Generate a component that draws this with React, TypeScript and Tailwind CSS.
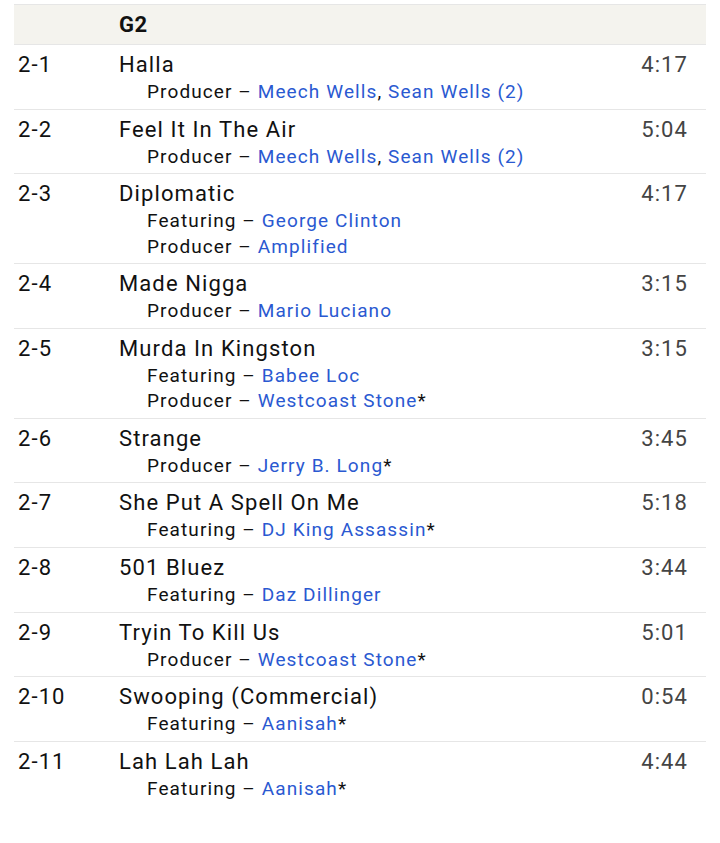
const tracks = [
  { pos: "2-1", title: "Halla", dur: "4:17", credits: [{ role: "Producer", names: [["Meech Wells", ""], ["Sean Wells (2)", ""]] }] },
  { pos: "2-2", title: "Feel It In The Air", dur: "5:04", credits: [{ role: "Producer", names: [["Meech Wells", ""], ["Sean Wells (2)", ""]] }] },
  {
    pos: "2-3", title: "Diplomatic", dur: "4:17",
    credits: [
      { role: "Featuring", names: [["George Clinton", ""]] },
      { role: "Producer", names: [["Amplified", ""]] },
    ],
  },
  { pos: "2-4", title: "Made Nigga", dur: "3:15", credits: [{ role: "Producer", names: [["Mario Luciano", ""]] }] },
  {
    pos: "2-5", title: "Murda In Kingston", dur: "3:15",
    credits: [
      { role: "Featuring", names: [["Babee Loc", ""]] },
      { role: "Producer", names: [["Westcoast Stone", "*"]] },
    ],
  },
  { pos: "2-6", title: "Strange", dur: "3:45", credits: [{ role: "Producer", names: [["Jerry B. Long", "*"]] }] },
  { pos: "2-7", title: "She Put A Spell On Me", dur: "5:18", credits: [{ role: "Featuring", names: [["DJ King Assassin", "*"]] }] },
  { pos: "2-8", title: "501 Bluez", dur: "3:44", credits: [{ role: "Featuring", names: [["Daz Dillinger", ""]] }] },
  { pos: "2-9", title: "Tryin To Kill Us", dur: "5:01", credits: [{ role: "Producer", names: [["Westcoast Stone", "*"]] }] },
  { pos: "2-10", title: "Swooping (Commercial)", dur: "0:54", credits: [{ role: "Featuring", names: [["Aanisah", "*"]] }] },
  { pos: "2-11", title: "Lah Lah Lah", dur: "4:44", credits: [{ role: "Featuring", names: [["Aanisah", "*"]] }] },
];

export default function App() {
  return (
    <div className="min-h-[843px] bg-white px-[14px] pt-[4px] font-['Roboto',sans-serif] text-[#111]">
      <div className="border-t border-[#e6e6e6]">
        <div className="flex h-[40px] items-center border-b border-[#e6e6e6] bg-[#f4f3ee]">
          <div className="w-[105px]" />
          <div className="text-[22px] font-bold tracking-[0.5px]">G2</div>
        </div>
        {tracks.map((t, i) => (
          <div
            key={t.pos}
            className={`flex pt-[5px] pb-[4.2px] ${i < tracks.length - 1 ? "border-b border-[#e6e6e6]" : ""}`}
          >
            <div className="w-[105px] shrink-0 pl-[4px] text-[22px] leading-[29px] tracking-[1.1px]">{t.pos}</div>
            <div className="flex-1">
              <div className="text-[22px] leading-[29px] tracking-[1.1px]">{t.title}</div>
              {t.credits.map((c) => (
                <div key={c.role} className="pl-[28px] text-[19px] leading-[25.4px] tracking-[1.1px]">
                  {c.role} –{" "}
                  {c.names.map(([n, star], j) => (
                    <span key={n}>
                      {j > 0 && ", "}
                      <a className="text-[#2a59d1]">{n}</a>
                      {star}
                    </span>
                  ))}
                </div>
              ))}
            </div>
            <div className="shrink-0 pr-[18px] text-[22px] leading-[29px] tracking-[1.1px] text-[#444]">{t.dur}</div>
          </div>
        ))}
      </div>
    </div>
  );
}
